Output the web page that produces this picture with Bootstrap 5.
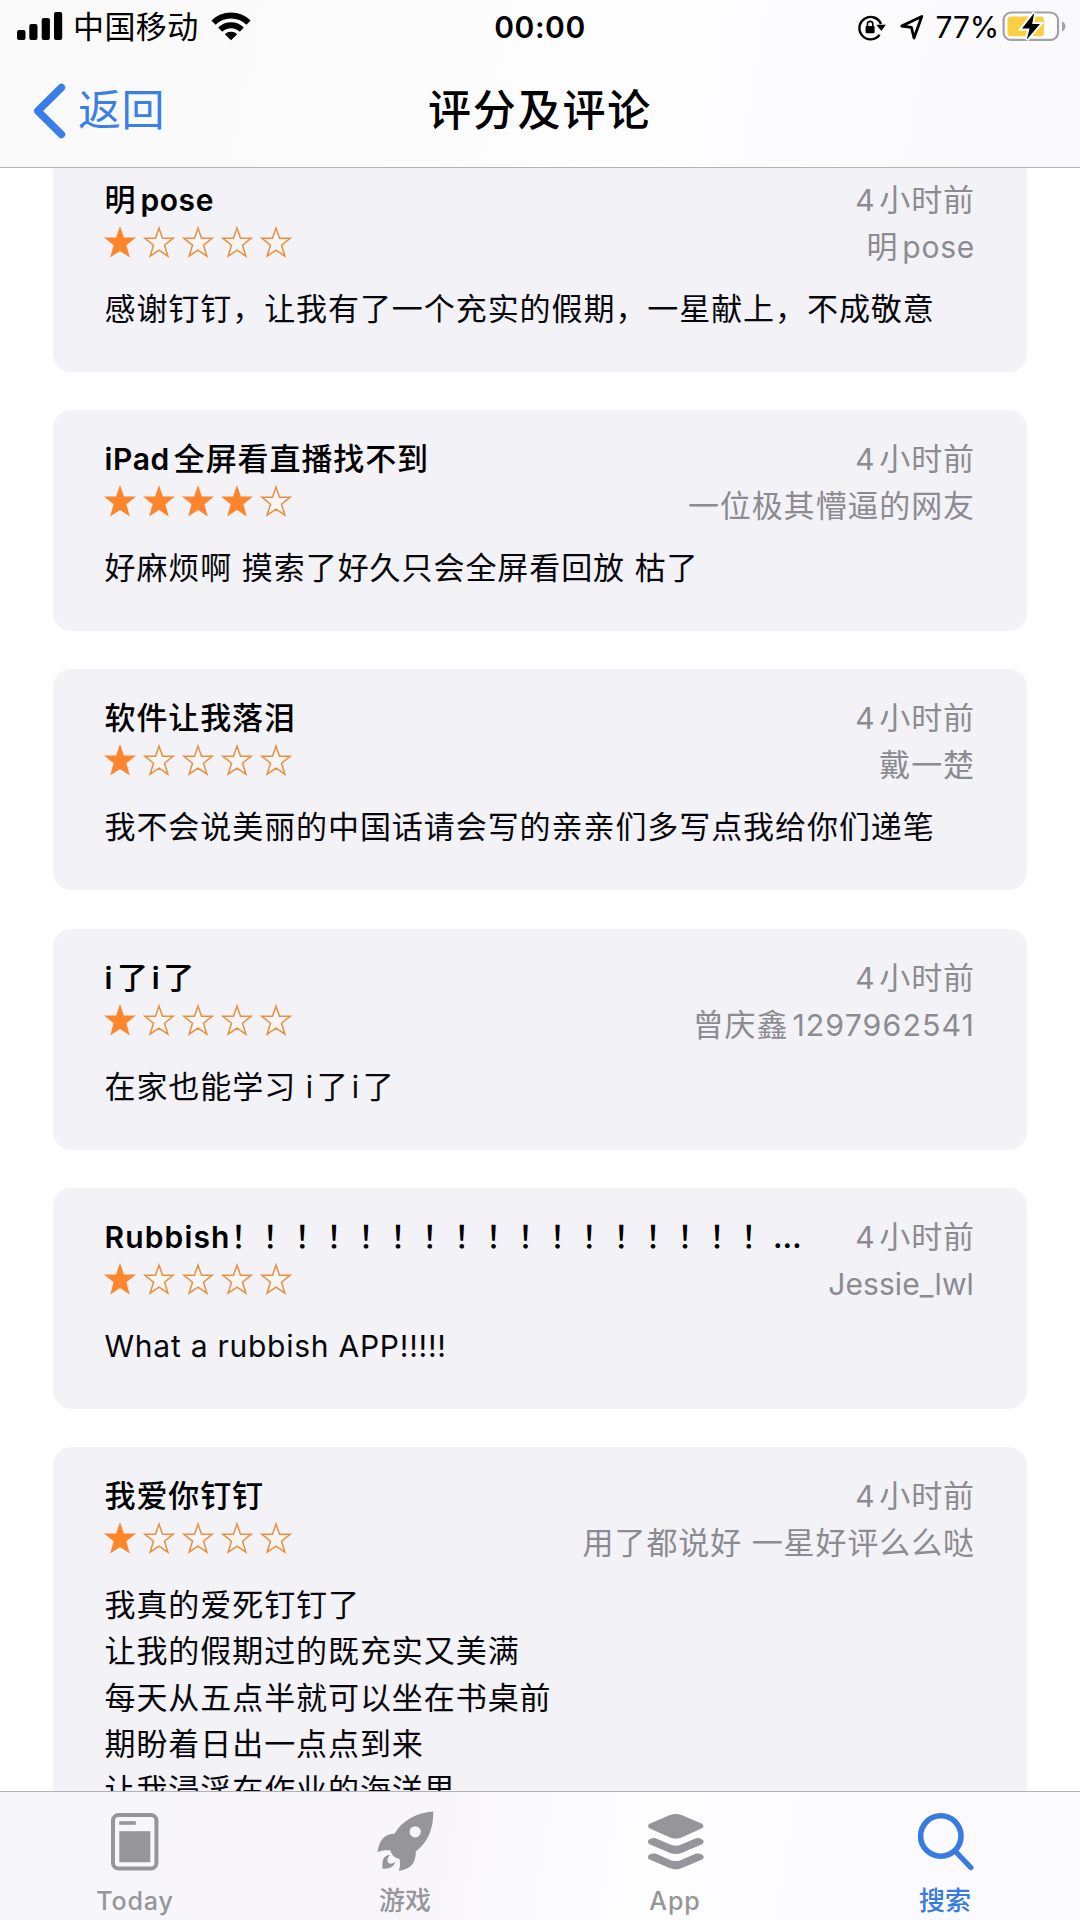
<!DOCTYPE html>
<html lang="zh-CN">
<head>
<meta charset="utf-8">
<meta name="viewport" content="width=device-width, initial-scale=1">
<title>评分及评论</title>
<link href="https://cdn.jsdelivr.net/npm/bootstrap@5.3.0/dist/css/bootstrap.min.css" rel="stylesheet">
<style>
  body { font-family: Inter, "Noto Sans CJK SC", sans-serif; color: #08080c; background: #fff; }
  .screen { height: 1920px; }
  .top-area { height: 168px; background: linear-gradient(100deg, #f9f9fa, #fdfdfe 60%, #f9f8fc); border-bottom: 1px solid #b2b1b6; }
  .status-bar { height: 54px; font-size: 31px; line-height: 54px; padding: 0 14px 0 17px; color: #000; }
  .status-side { flex: 1 1 0; }
  .carrier { letter-spacing: .4px; margin: 0 12px 0 10px; }
  .clock { font-weight: 600; font-size: 30px; letter-spacing: .6px; margin-left: -3px; }
  .battery-text { font-size: 30px; letter-spacing: -.2px; line-height: 56px; margin: 0 3px 0 12px; }
  .nav-row { height: 113px; padding: 0 32px; font-size: 43px; line-height: 113px; }
  .back-link { color: #3b80e6; letter-spacing: .5px; }
  .page-title { font-size: 43px; font-weight: 500; letter-spacing: 1.8px; color: #000; }
  .reviews { padding: 0 53px; min-height: 0; }
  .review-list { gap: 38.2px; margin-top: -17px; }
  .review { background: #f3f2f7; border-radius: 18px; height: 221px; padding: 25px 52px 0 51.5px; flex: none; }
  .review-long { height: 500px; }
  .review-head { height: 97px; }
  .review-title { font-size: 31px; line-height: 47px; height: 46px; font-weight: 500; letter-spacing: .9px; color: #000; }
  .meta-text { color: #8c8b91; font-size: 31px; line-height: 47px; letter-spacing: .9px; }
  .meta-text + .meta-text { line-height: 46px; }
  .review-body { font-size: 31px; line-height: 46.3px; letter-spacing: .93px; padding-top: 13px; white-space: nowrap; }
  .lat-b { font-weight: 600; font-size: 30px; letter-spacing: .6px; }
  .lat-wide { letter-spacing: 1.15px; }
  .lat { font-size: 30px; letter-spacing: .75px; }
  .lat-num { letter-spacing: 1.1px; font-size: 30.3px; }
  .lat-tight { letter-spacing: .1px; margin-right: 1px; }
  .gap-r { margin-right: 4px; }
  .gap-l { margin-left: 4px; }
  .near-r { margin-right: 3px; }
  .near-l { margin-left: 3px; }
  .stars { gap: 7px; margin: 4px 0 0 -.5px; height: 34px; }
  .stars svg { width: 32px; height: 32px; overflow: visible; }
  .tab-area { height: 129px; border-top: 1px solid #b2b1b6; background: linear-gradient(100deg, #f7f6fa, #f8f6fb 40%, #fdfdfe 60%, #fafaff); color: #96959a; }
  .tab-item { flex: 1 1 0; padding-top: 19px; font-size: 26px; line-height: 34px; }
  .tab-item svg { width: 60px; height: 60px; margin-bottom: 13px; }
  .tab-cn { font-weight: 500; font-size: 26px; }
  .tab-lat { font-weight: 500; letter-spacing: .9px; font-size: 25px; }
  .tab-on { color: #387be0; }
</style>
<script src="https://cdn.jsdelivr.net/npm/bootstrap@5.3.0/dist/js/bootstrap.bundle.min.js"></script>
</head>
<body>
<svg class="d-none" xmlns="http://www.w3.org/2000/svg">
  <symbol id="star-on" viewBox="0 0 32 32"><path fill="#fd862c" d="M16 0l3.900 11.400H32l-9.600 7.800 3.400 12.200L16 25 6.200 31.400l3.400-12.200L0 11.400H12.100z"/></symbol>
  <symbol id="star-off" viewBox="0 0 32 32"><path fill="#f8f5f6" stroke="#e8903f" stroke-width="1.500" d="M16 2l3.500 10.200H30.300l-8.800 7 3.400 11L16 24.200 7.100 30.200l3.400-11-8.800-7H12.500z"/></symbol>
</svg>
<div class="screen d-flex flex-column overflow-hidden">
  <header class="top-area flex-shrink-0">
    <div class="status-bar d-flex align-items-center">
      <div class="status-side d-flex align-items-center">
        <svg width="46" height="54" viewBox="0 0 46 54"><rect x="0" y="30" width="8.5" height="10" rx="2"/><rect x="12.3" y="24" width="8.2" height="16" rx="2"/><rect x="24.7" y="18" width="8.2" height="22" rx="2"/><rect x="37" y="12" width="8.2" height="28" rx="2"/></svg>
        <span class="carrier">中国移动</span>
        <svg width="40" height="54" viewBox="0 0 40 54" fill="none" stroke="#000"><path stroke-width="6" d="M2.5 22.6a25 25 0 0 1 35 0"/><path stroke-width="5.8" d="M9.2 29.6a15.6 15.6 0 0 1 21.6 0"/><path fill="#000" stroke="none" d="M13.8 34.2a9 9 0 0 1 12.4 0L20 40.3z"/></svg>
      </div>
      <span class="clock">00:00</span>
      <div class="status-side d-flex align-items-center justify-content-end">
        <svg width="29" height="54" viewBox="0 0 29 54"><path fill="none" stroke="#000" stroke-width="2.4" d="M22.6 34.8A11.2 11.2 0 1 1 24 24"/><path d="M19.200 24.800h9.600l-4.400 6.200z"/><rect x="8.6" y="26" width="9" height="7.200" rx="1"/><path fill="none" stroke="#000" stroke-width="1.6" d="M10.4 27v-2.900a2.700 2.700 0 0 1 5.400 0V27"/></svg>
        <svg width="24" height="54" viewBox="0 0 24 54" style="margin-left:14px"><path fill="none" stroke="#000" stroke-width="2.800" stroke-linejoin="round" d="M1.700 26L21.800 16.400 14 38 11.400 27.400z"/></svg>
        <span class="battery-text">77%</span>
        <svg width="64" height="54" viewBox="0 0 64 54"><rect x="1.600" y="12.500" width="54.400" height="27.400" rx="7.5" fill="#fff" stroke="#a2a1a4" stroke-width="2.200"/><rect x="5.500" y="16.400" width="36.500" height="19.800" rx="3.5" fill="#fbcf43"/><path fill="#a2a1a4" d="M60 21.200c4.600 2.600 4.600 7.800 0 10.400z"/><path fill="#000" stroke="#fff" stroke-width="4" paint-order="stroke" d="M32.2 13L20 28.4h7.6L24.8 39.6 38 24h-7.8z"/></svg>
      </div>
    </div>
    <div class="nav-row d-flex align-items-center">
      <div class="status-side d-flex align-items-center back-link">
        <svg width="34" height="60" viewBox="0 0 34 60" fill="none" stroke="#387ee6" stroke-width="7.4" stroke-linecap="round" stroke-linejoin="round"><path d="M29.5 6.5L5.7 30 29.5 53.5"/></svg>
        <span class="ms-2 ps-1">返回</span>
      </div>
      <h1 class="page-title m-0">评分及评论</h1>
      <div class="status-side"></div>
    </div>
  </header>

  <main class="reviews flex-grow-1 overflow-hidden">
    <div class="review-list d-flex flex-column">
      <article class="review">
        <div class="review-head d-flex justify-content-between">
          <div><div class="review-title">明<span class="lat-b gap-l">pose</span></div><div class="stars d-flex" data-rate="1"></div></div>
          <div class="text-end"><div class="meta-text"><span class="lat gap-r">4</span>小时前</div><div class="meta-text">明<span class="lat gap-l">pose</span></div></div>
        </div>
        <div class="review-body">感谢钉钉，让我有了一个充实的假期，一星献上，不成敬意</div>
      </article>
      <article class="review">
        <div class="review-head d-flex justify-content-between">
          <div><div class="review-title"><span class="lat-b gap-r">iPad</span>全屏看直播找不到</div><div class="stars d-flex" data-rate="4"></div></div>
          <div class="text-end"><div class="meta-text"><span class="lat gap-r">4</span>小时前</div><div class="meta-text">一位极其懵逼的网友</div></div>
        </div>
        <div class="review-body">好麻烦啊 摸索了好久只会全屏看回放 枯了</div>
      </article>
      <article class="review">
        <div class="review-head d-flex justify-content-between">
          <div><div class="review-title">软件让我落泪</div><div class="stars d-flex" data-rate="1"></div></div>
          <div class="text-end"><div class="meta-text"><span class="lat gap-r">4</span>小时前</div><div class="meta-text">戴一楚</div></div>
        </div>
        <div class="review-body">我不会说美丽的中国话请会写的亲亲们多写点我给你们递笔</div>
      </article>
      <article class="review">
        <div class="review-head d-flex justify-content-between">
          <div><div class="review-title"><span class="lat-b gap-r">i</span>了<span class="lat-b near-l near-r">i</span>了</div><div class="stars d-flex" data-rate="1"></div></div>
          <div class="text-end"><div class="meta-text"><span class="lat gap-r">4</span>小时前</div><div class="meta-text">曾庆鑫<span class="lat lat-num gap-l">1297962541</span></div></div>
        </div>
        <div class="review-body">在家也能学习 <span class="lat near-r">i</span>了<span class="lat near-l near-r">i</span>了</div>
      </article>
      <article class="review">
        <div class="review-head d-flex justify-content-between">
          <div><div class="review-title text-nowrap"><span class="lat-b lat-wide">Rubbish</span>！！！！！！！！！！！！！！！！！<span class="lat-b lat-wide">…</span></div><div class="stars d-flex" data-rate="1"></div></div>
          <div class="text-end"><div class="meta-text"><span class="lat gap-r">4</span>小时前</div><div class="meta-text"><span class="lat lat-tight">Jessie_lwl</span></div></div>
        </div>
        <div class="review-body"><span class="lat">What a rubbish APP!!!!!</span></div>
      </article>
      <article class="review review-long">
        <div class="review-head d-flex justify-content-between">
          <div><div class="review-title">我爱你钉钉</div><div class="stars d-flex" data-rate="1"></div></div>
          <div class="text-end"><div class="meta-text"><span class="lat gap-r">4</span>小时前</div><div class="meta-text">用了都说好 一星好评么么哒</div></div>
        </div>
        <div class="review-body">我真的爱死钉钉了<br>让我的假期过的既充实又美满<br>每天从五点半就可以坐在书桌前<br>期盼着日出一点点到来<br>让我浸淫在作业的海洋里</div>
      </article>
    </div>
  </main>

  <nav class="tab-area d-flex flex-shrink-0 text-center">
    <div class="tab-item d-flex flex-column align-items-center">
      <svg viewBox="0 0 60 60"><rect x="8" y="4" width="43.4" height="53.4" rx="5.5" fill="none" stroke="currentColor" stroke-width="4"/><rect x="14.3" y="10.2" width="16.5" height="3.6" fill="currentColor"/><rect x="14.3" y="20.2" width="31" height="31" fill="currentColor"/></svg>
      <span class="tab-lat">Today</span>
    </div>
    <div class="tab-item d-flex flex-column align-items-center">
      <svg viewBox="0 0 60 60" fill="currentColor"><path fill-rule="evenodd" d="M58.3.5C42 1.5 27 9.5 19.5 22.8 9 23 4.500 29 2.500 41.200 7 39.300 11 38.800 15.500 39.600 16.500 44 19.500 47 24.500 48 25.500 52 25 56 23.800 60 35 58 41 53 40.800 40.500 52 32 58.500 19 58.300.5zM40.200 15.200a5.600 5.600 0 1 1 0 11.200 5.600 5.600 0 0 1 0-11.200z"/><path d="M15.300 44C10.500 43.500 7.800 47.500 7.500 51.500L7.300 57.500C13 58.300 19 56.500 20.500 50.500 18.500 52.500 15.500 53.500 13.500 52 11.500 50 12.500 46 15.300 44z"/></svg>
      <span class="tab-cn">游戏</span>
    </div>
    <div class="tab-item d-flex flex-column align-items-center">
      <svg viewBox="0 0 60 60" fill="currentColor"><path d="M24.500 4.300Q30.700 1.700 37 4.300L56.500 12.600Q60.500 15 56.500 17.400L37 26.300Q30.700 29 24.500 26.300L5 17.400Q1 15 5 12.600z"/><path id="layer" d="M4.500 28.200Q8 26.500 10.500 27.200L26.500 34Q30.700 35.300 35 34L51 27.200Q53.500 26.500 57 28.200 60.300 31 57 33.200L37 41.700Q30.700 44.300 24.500 41.700L4.500 33.200Q1.300 31 4.500 28.200z"/><use href="#layer" y="15.400"/></svg>
      <span class="tab-lat">App</span>
    </div>
    <div class="tab-item tab-on d-flex flex-column align-items-center">
      <svg viewBox="0 0 60 60" fill="none" stroke="currentColor" stroke-linecap="round"><circle cx="25.800" cy="25" r="20.200" stroke-width="5.600"/><path stroke-width="5.400" d="M40.500 40.500L55.800 56.500"/></svg>
      <span class="tab-cn">搜索</span>
    </div>
  </nav>
</div>
<script>
  document.querySelectorAll('.stars').forEach(function (box) {
    for (var i = 0; i < 5; i++) {
      box.insertAdjacentHTML('beforeend', '<svg><use href="#star-' + (i < +box.dataset.rate ? 'on' : 'off') + '"/></svg>');
    }
  });
</script>
</body>
</html>
